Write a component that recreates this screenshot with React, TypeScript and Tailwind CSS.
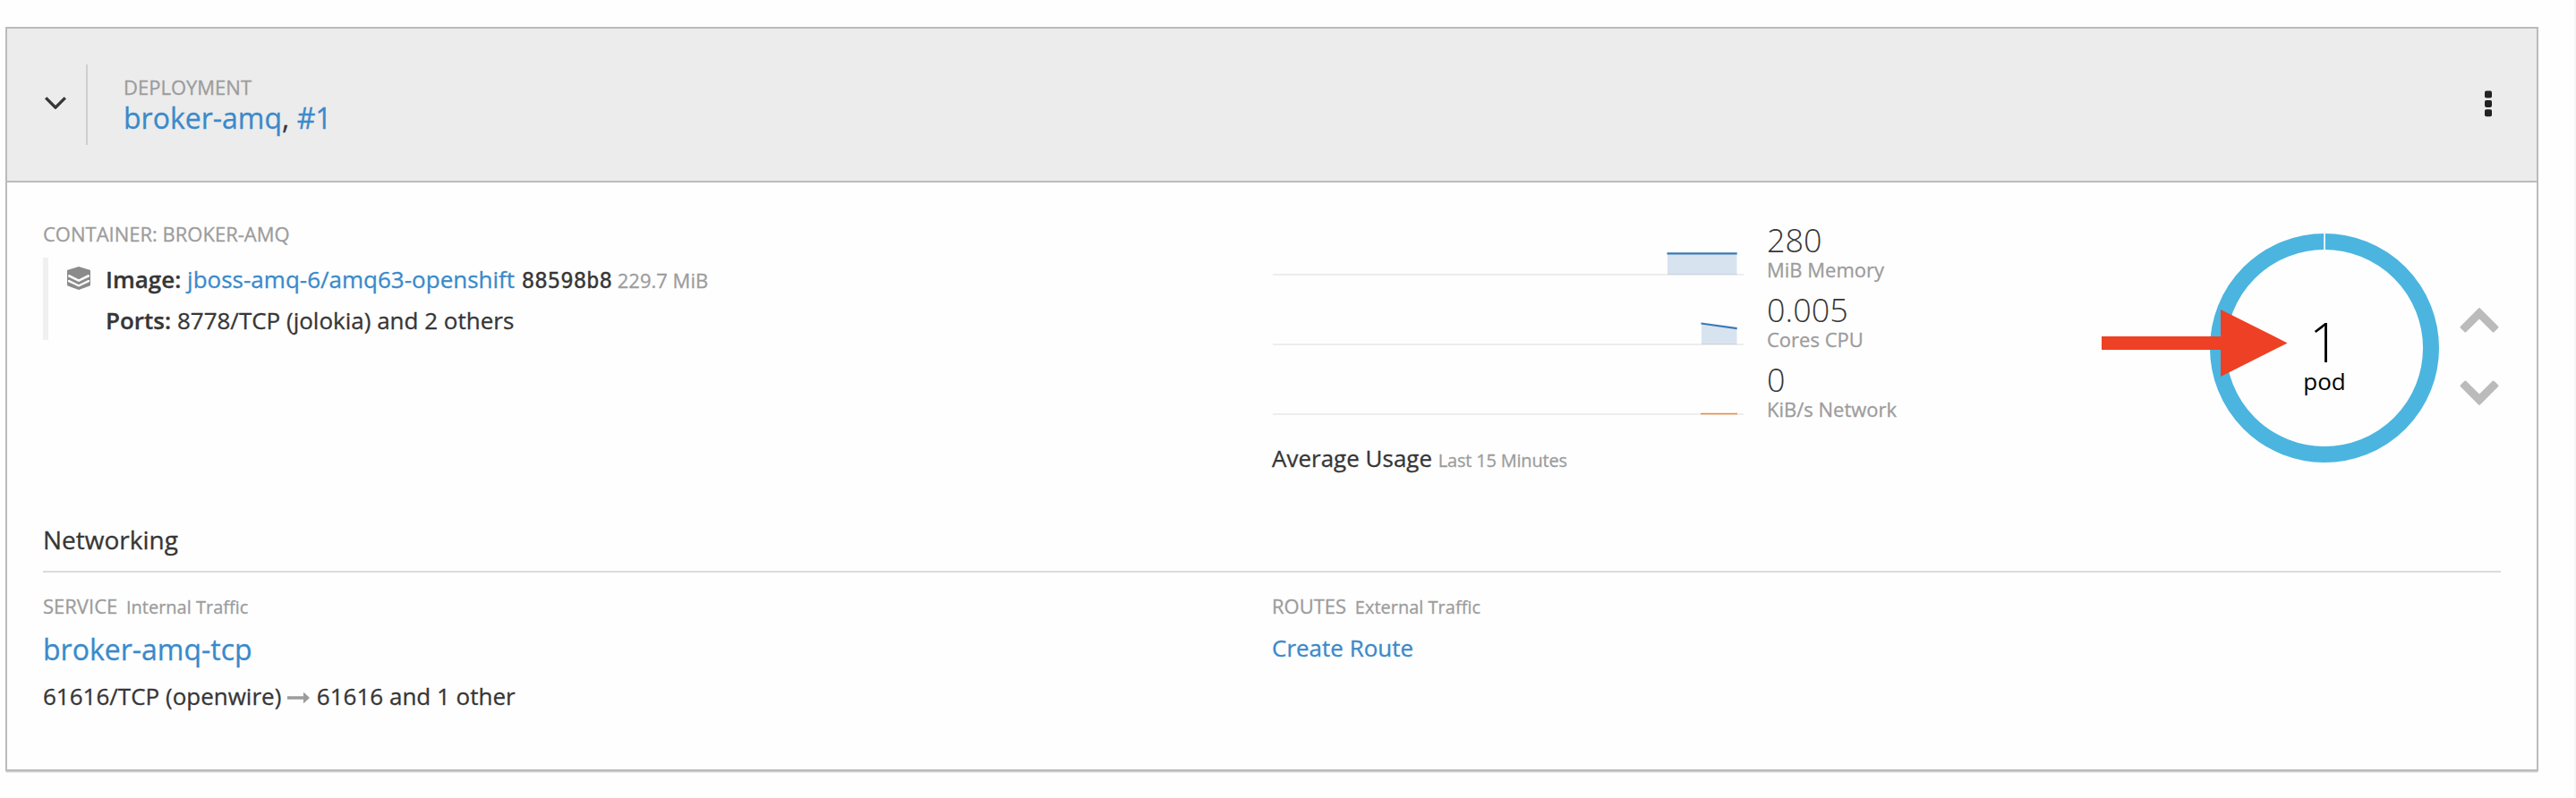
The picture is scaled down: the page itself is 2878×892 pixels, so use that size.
import React from "react";

type Metric = {
  value: string;
  unit: string;
  area?: string;
  line: string;
  stroke: string;
  strokeWidth: number;
};

const metrics: Metric[] = [
  {
    value: "280",
    unit: "MiB Memory",
    area: "M441 35.5H518.5V59H441Z",
    line: "M440.5 35.3H518.7",
    stroke: "#3a7ab5",
    strokeWidth: 2.2,
  },
  {
    value: "0.005",
    unit: "Cores CPU",
    area: "M479 36L518.5 41.2V59H479Z",
    line: "M478.5 35.5L518.7 41.2",
    stroke: "#3a7ab5",
    strokeWidth: 2.2,
  },
  {
    value: "0",
    unit: "KiB/s Network",
    line: "M478 58.5H519",
    stroke: "#ee8b3c",
    strokeWidth: 1.4,
  },
];

function MetricRow({ m }: { m: Metric }) {
  return (
    <div className="flex h-[78px]">
      <svg width="526" height="60" viewBox="0 0 526 60" className="ml-px mr-[26px] block shrink-0">
        <rect x="0" y="58" width="526" height="2" fill="#ededed" />
        {m.area && <path d={m.area} fill="#3a7ab5" fillOpacity="0.2" />}
        <path d={m.line} fill="none" stroke={m.stroke} strokeWidth={m.strokeWidth} />
      </svg>
      <div>
        <div className="text-[36px] font-light leading-[42px]">{m.value}</div>
        <div className="text-[22px] leading-[22px] text-[#9c9c9c] [-webkit-text-stroke:0.3px]">{m.unit}</div>
      </div>
    </div>
  );
}

function ImageIcon() {
  return (
    <svg width="26" height="26" viewBox="0 0 26 26" className="block">
      <g fill="#8b8b8b">
        <path d="M13 0L25.3 3.8Q26 4 26 4.8V9.2L13 14.8L0 9.2V4.8Q0 4 .7 3.8Z" />
        <path d="M0 10.8L13 17L26 10.8V14.6L13 20.6L0 14.6Z" />
        <path d="M0 16.4L13 22.4L26 16.4V20.2Q26 21 25.3 21.4L13 26L.7 21.4Q0 21 0 20.2Z" />
      </g>
      <path d="M1.6 9.7L13 15.4L24.4 9.7M1.6 15.5L13 21.3L24.4 15.5" fill="none" stroke="#fefefe" strokeWidth="1.9" />
      <path d="M.5 8V18M25.5 8V18" stroke="#8b8b8b" strokeWidth="1" />
    </svg>
  );
}

function PodDonut() {
  return (
    <svg width="260" height="260" viewBox="0 0 260 260" className="block">
      <circle cx="130" cy="130" r="119" fill="none" stroke="#4bb5e0" strokeWidth="18" />
      <rect x="129.2" y="0" width="1.7" height="24" fill="#fefefe" />
      <text x="130" y="146" textAnchor="middle" fill="#000" className="text-[60px] font-light">
        1
      </text>
      <text x="130" y="177" textAnchor="middle" fill="#000" className="text-[26px]">
        pod
      </text>
    </svg>
  );
}

function ScaleChevron({ className }: { className?: string }) {
  return (
    <svg width="44" height="30" viewBox="0 0 44 30" className={className}>
      <path
        d="M21.2 1.4Q22 .6 22.8 1.4L43 21.7Q44 22.8 43 23.8L38.7 28Q37.6 29 36.6 28L22 13.6L7.4 28Q6.4 29 5.3 28L1 23.8Q0 22.8 1 21.7Z"
        fill="#bbbbbb"
      />
    </svg>
  );
}

export default function App() {
  return (
    <div className="relative h-[892px] w-[2878px] overflow-hidden border-r-2 border-[#f5f5f5] bg-[#fefefe] pl-[6px] pt-[30px] font-['Open_Sans',sans-serif] text-[26px] text-[#363636]">
      <section className="h-[832px] w-[2830px] border-2 border-[#bbbbbb] shadow-[0_2px_1px_-1px_#cfcfcf,0_2px_0_-0.5px_#dddddd]">
        <header className="flex h-[172px] items-center border-b-2 border-[#bbbbbb] bg-[#ececec]">
          <div className="flex h-[90px] w-[90px] items-center justify-end border-r-2 border-[#cfcfcf] pr-[22px]">
            <svg width="24" height="14" viewBox="0 0 24 14" className="mt-[-4px] block">
              <path d="M1.2 1.4L12 12.2L22.8 1.4" fill="none" stroke="#363636" strokeWidth="3.3" />
            </svg>
          </div>
          <div className="ml-[40px] flex-1 [-webkit-text-stroke:0.3px]">
            <div className="text-[22px] leading-[30px] text-[#9c9c9c]">DEPLOYMENT</div>
            <div className="text-[32px] leading-[40px]">
              <a className="text-[#3a8acb]">broker-amq</a>, <a className="text-[#3a8acb]">#1</a>
            </div>
          </div>
          <svg width="8" height="30" viewBox="0 0 8 30" className="mr-[50px] mt-[-2px] block">
            <rect y="0.6" width="8" height="8" rx="1.8" fill="#222" />
            <rect y="10.9" width="8" height="8" rx="1.8" fill="#222" />
            <rect y="21.2" width="8" height="8" rx="1.8" fill="#222" />
          </svg>
        </header>

        <div className="px-[40px] pt-[42px]">
          <div className="grid h-[336px] grid-cols-2">
            <div className="[-webkit-text-stroke:0.3px]">
              <div className="text-[22px] leading-[30px] text-[#9c9c9c]">CONTAINER: BROKER-AMQ</div>
              <div className="mt-[12px] flex h-[92px] border-l-[6px] border-[#f0f0f0]">
                <div className="ml-[21px] mr-[17px] pt-[10px]">
                  <ImageIcon />
                </div>
                <div className="pt-px leading-[46px]">
                  <div className="h-[46px] whitespace-nowrap">
                    <span className="font-semibold">Image:</span>{" "}
                    <a className="text-[#3a8acb]">jboss-amq-6/amq63-openshift</a>{" "}
                    <span className="ml-px font-['DejaVu_Sans_Mono',monospace] text-[24px] leading-none">88598b8</span>{" "}
                    <span className="ml-[-1px] text-[22px] leading-none text-[#9c9c9c]">229.7 MiB</span>
                  </div>
                  <div className="h-[46px] whitespace-nowrap">
                    <span className="font-semibold">Ports:</span> 8778/TCP (jolokia) and 2 others
                  </div>
                </div>
              </div>
            </div>

            <div className="flex justify-between">
              <div className="pt-[2px]">
                {metrics.map((m) => (
                  <MetricRow key={m.unit} m={m} />
                ))}
                <div className="mt-[12px] leading-[36px] [-webkit-text-stroke:0.3px]">
                  Average Usage{" "}
                  <span className="text-[20px] leading-none tracking-[-0.2px] text-[#9c9c9c]">Last 15 Minutes</span>
                </div>
              </div>
              <div className="flex pr-[2px] pt-[13px]">
                <PodDonut />
                <div className="ml-[21px] flex flex-col gap-[51px] pt-[84px]">
                  <ScaleChevron className="block" />
                  <ScaleChevron className="block rotate-180" />
                </div>
              </div>
            </div>
          </div>

          <h3 className="h-[58px] border-b-2 border-[#dbdbdb] text-[28px] leading-[42px] [-webkit-text-stroke:0.3px]">
            Networking
          </h3>

          <div className="grid grid-cols-2 pt-[22px] [-webkit-text-stroke:0.3px]">
            <div>
              <div className="text-[22px] leading-[30px] text-[#9c9c9c]">
                SERVICE <span className="ml-[4px] text-[20px] leading-none">Internal Traffic</span>
              </div>
              <div className="mt-[12px] text-[32px] leading-[44px]">
                <a className="text-[#3a8acb]">broker-amq-tcp</a>
              </div>
              <div className="mt-[10px] leading-[40px]">
                61616/TCP (openwire){" "}
                <svg width="25" height="12" viewBox="0 0 25 12" className="mr-px inline-block align-[2.5px]">
                  <path d="M0 4.2H18V0.3Q18.2 -.2 18.8 .3L25 6L18.8 11.7Q18.2 12.2 18 11.7V7.8H0Z" fill="#9c9c9c" />
                </svg>{" "}
                61616 and 1 other
              </div>
            </div>
            <div>
              <div className="text-[22px] leading-[30px] text-[#9c9c9c]">
                ROUTES <span className="ml-[4px] text-[20px] leading-none">External Traffic</span>
              </div>
              <div className="mt-[12px] leading-[40px]">
                <a className="text-[#3a8acb]">Create Route</a>
              </div>
            </div>
          </div>
        </div>
      </section>

      <svg width="208" height="76" viewBox="0 0 208 76" className="absolute left-[2348px] top-[346px]">
        <path d="M0 30H133V0L207.6 37.4L133 75V45H0Z" fill="#ee4024" />
      </svg>
    </div>
  );
}
